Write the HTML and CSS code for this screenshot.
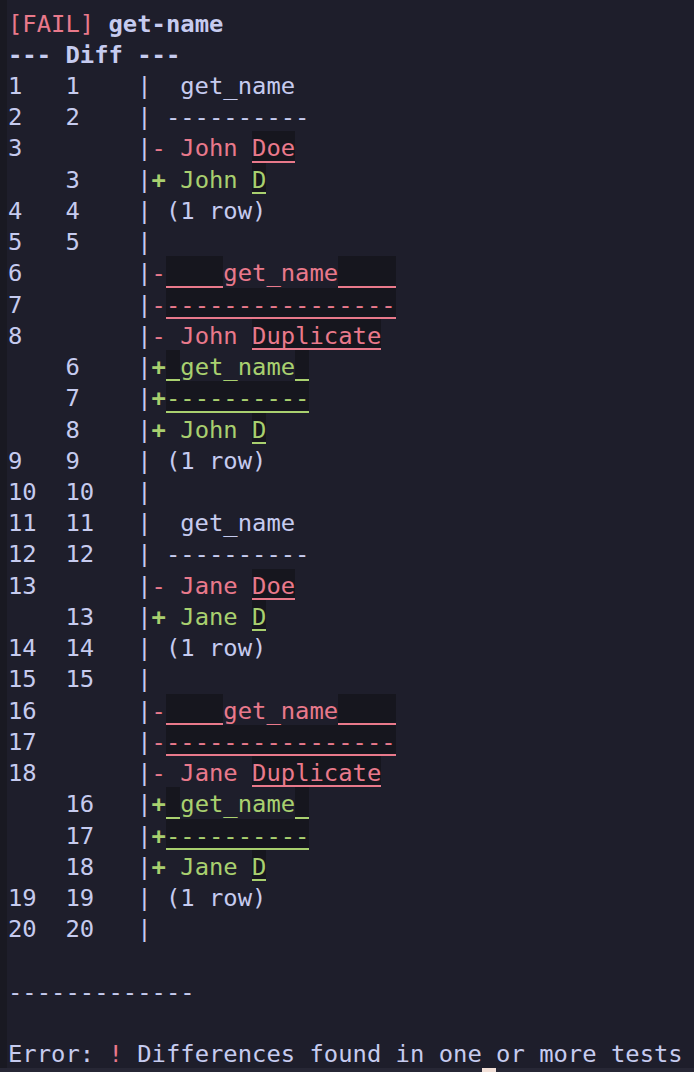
FILE: index.html
```html
<!DOCTYPE html>
<html>
<head>
<meta charset="utf-8">
<link rel="stylesheet" href="styles.css">
</head>
<body>
<div class="screen">
<div class="r"><span class="red">[FAIL]</span> <span class="b">get-name</span></div>
<div class="r"><span class="b">--- Diff ---</span></div>
<div class="r">1   1    |  get_name</div>
<div class="r">2   2    | ----------</div>
<div class="r">3        |<span class="red">- John <span class="hl hr">Doe</span></span></div>
<div class="r">    3    |<span class="grn"><span class="b">+</span> John <span class="hl hg">D</span></span></div>
<div class="r">4   4    | (1 row)</div>
<div class="r">5   5    |</div>
<div class="r">6        |<span class="red">-<span class="hl hr">    </span>get_name<span class="hl hr">    </span></span></div>
<div class="r">7        |<span class="red">-<span class="hl hr">----------------</span></span></div>
<div class="r">8        |<span class="red">- John <span class="hl hr">Duplicate</span></span></div>
<div class="r">    6    |<span class="grn"><span class="b">+</span><span class="hl hg"> </span>get_name<span class="hl hg"> </span></span></div>
<div class="r">    7    |<span class="grn"><span class="b">+</span><span class="hl hg">----------</span></span></div>
<div class="r">    8    |<span class="grn"><span class="b">+</span> John <span class="hl hg">D</span></span></div>
<div class="r">9   9    | (1 row)</div>
<div class="r">10  10   |</div>
<div class="r">11  11   |  get_name</div>
<div class="r">12  12   | ----------</div>
<div class="r">13       |<span class="red">- Jane <span class="hl hr">Doe</span></span></div>
<div class="r">    13   |<span class="grn"><span class="b">+</span> Jane <span class="hl hg">D</span></span></div>
<div class="r">14  14   | (1 row)</div>
<div class="r">15  15   |</div>
<div class="r">16       |<span class="red">-<span class="hl hr">    </span>get_name<span class="hl hr">    </span></span></div>
<div class="r">17       |<span class="red">-<span class="hl hr">----------------</span></span></div>
<div class="r">18       |<span class="red">- Jane <span class="hl hr">Duplicate</span></span></div>
<div class="r">    16   |<span class="grn"><span class="b">+</span><span class="hl hg"> </span>get_name<span class="hl hg"> </span></span></div>
<div class="r">    17   |<span class="grn"><span class="b">+</span><span class="hl hg">----------</span></span></div>
<div class="r">    18   |<span class="grn"><span class="b">+</span> Jane <span class="hl hg">D</span></span></div>
<div class="r">19  19   | (1 row)</div>
<div class="r">20  20   |</div>
<div class="r"></div>
<div class="r">-------------</div>
<div class="r"></div>
<div class="r">Error: <span class="red">!</span> Differences found in one or more tests</div>
<div class="r prompt"><span class="pad">                                 </span><span class="cursor"> </span></div>
</div>
</body>
</html>
```

FILE: styles.css
```css
html, body {
  margin: 0;
  padding: 0;
  background: #1e1e2b;
  height: 100%;
  overflow: hidden;
}
.screen {
  border-left: 7px solid #191922;
  padding: 6.5px 0 0 1px;
  min-height: 1072px;
  box-sizing: border-box;
  font-family: "DejaVu Sans Mono", "Liberation Mono", monospace;
  font-size: 23.85px;
  color: #c6cbef;
}
.r {
  height: 31.24px;
  line-height: 35.24px;
  white-space: pre;
}
.b { font-weight: bold; }
.red { color: #e9798b; }
.grn { color: #a9d06f; }
.hl {
  display: inline-block;
  height: 31.24px;
  vertical-align: top;
  background: #16161e;
}
.hr { box-shadow: inset 0 -3px 0 -1px #e9798b; }
.hg { box-shadow: inset 0 -3px 0 -1px #a9d06f; }
.prompt {
  background: #272735;
  margin-left: -8px;
  padding-left: 8px;
}
.cursor {
  display: inline-block;
  width: 14.36px;
  height: 31.24px;
  vertical-align: top;
  background: #f2e0d8;
}
```
